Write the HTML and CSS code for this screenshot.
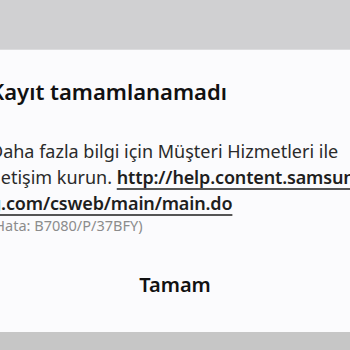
FILE: index.html
```html
<!DOCTYPE html>
<html lang="tr">
<head>
<meta charset="utf-8">
<link rel="stylesheet" href="styles.css">
</head>
<body>
<div class="screen">
  <div class="top-bar"></div>
  <div class="dialog">
    <div class="content">
      <h1 class="title">Kayıt tamamlanamadı</h1>
      <div class="message">
        <div class="line">Daha fazla bilgi için Müşteri Hizmetleri ile</div>
        <div class="line">İletişim kurun. <span class="link">http://help.content.samsun</span></div>
        <div class="line"><span class="link">g.com/csweb/main/main.do</span></div>
      </div>
      <div class="code">(Hata: B7080/P/37BFY)</div>
    </div>
    <div class="actions">
      <button class="btn">Tamam</button>
    </div>
  </div>
  <div class="bottom-bar"></div>
</div>
</body>
</html>
```
FILE: styles.css
```css
html, body {
  margin: 0;
  padding: 0;
  width: 350px;
  height: 350px;
  overflow: hidden;
  background: #c6c6c6;
  font-family: "Noto Sans", Roboto, sans-serif;
}
.screen {
  display: flex;
  flex-direction: column;
  height: 350px;
}
.top-bar {
  height: 49px;
  background: #d0d0d2;
  border-bottom: 1px solid #dcdcde;
  flex: none;
}
.dialog {
  height: 282px;
  background: #fbfbfd;
  overflow: hidden;
  display: flex;
  flex-direction: column;
  flex: none;
}
.content {
  margin-left: -10px;
  padding-top: 26px;
  white-space: nowrap;
}
.title {
  margin: 0;
  font-size: 22px;
  line-height: 30px;
  font-weight: 600;
  color: #111111;
}
.message {
  margin-top: 32px;
  font-size: 18px;
  line-height: 26px;
  color: #2a2a2a;
}
.link {
  font-weight: 600;
  letter-spacing: -0.15px;
  color: #1e1e1e;
  text-decoration: underline;
  text-decoration-color: #555;
  text-decoration-thickness: 1.5px;
  text-underline-offset: 4px;
}
.code {
  font-size: 14.5px;
  line-height: 18px;
  color: #8c8c8c;
}
.actions {
  margin-top: 37px;
  display: flex;
  justify-content: center;
}
.btn {
  border: 0;
  background: none;
  padding: 0;
  font-family: inherit;
  font-size: 20px;
  line-height: 28px;
  font-weight: 600;
  color: #111111;
}
.bottom-bar {
  flex: 1;
  background: #c6c6c6;
}
```
